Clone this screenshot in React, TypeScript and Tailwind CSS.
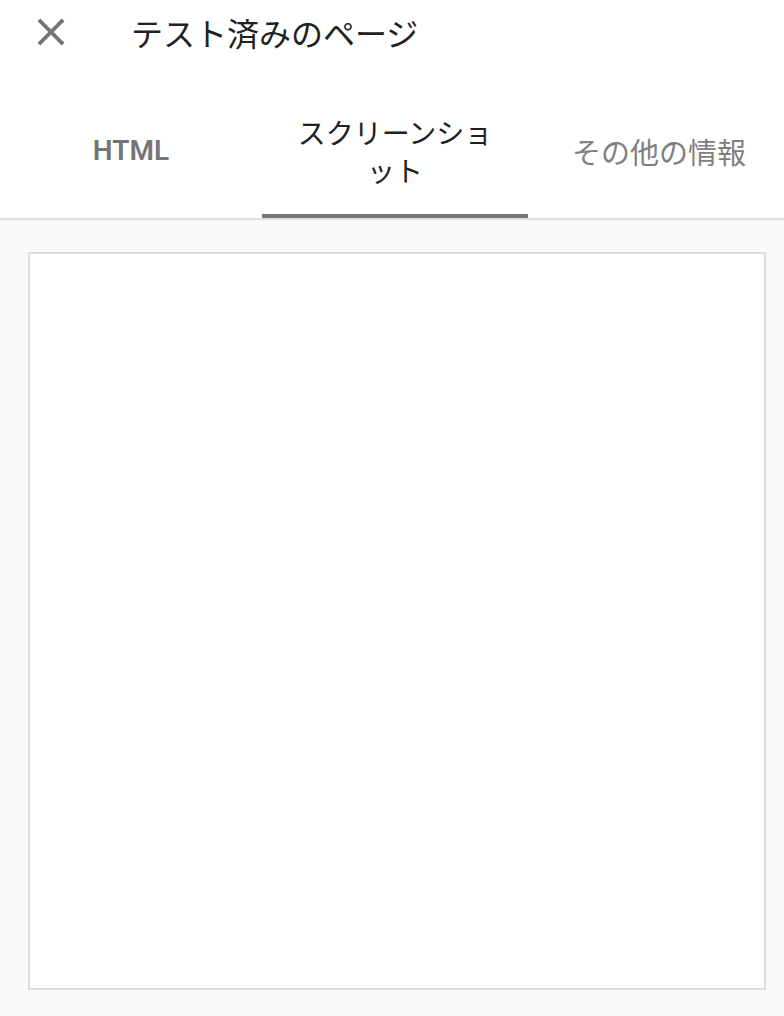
import React from 'react'

const tabs = [
  { label: 'HTML', width: 'w-[262px]', active: false, cls: 'font-semibold text-[#757575] font-[Roboto,"Noto_Sans_CJK_JP",sans-serif]' },
  { label: 'スクリーンショット', width: 'w-[266px]', active: true, cls: 'text-[#212121]' },
  { label: 'その他の情報', width: 'flex-1', active: false, cls: 'text-[#808080] text-[29px] ml-[6px]' },
]

export default function App() {
  return (
    <div className="flex h-[1016px] w-[784px] flex-col overflow-hidden bg-white font-['Noto_Sans_CJK_JP',sans-serif]">
      <header className="flex h-[64px] shrink-0 items-center">
        <button className="ml-[28px] flex h-[46px] w-[46px] items-center justify-center text-[#757575]" aria-label="閉じる">
          <svg viewBox="0 0 24 24" className="h-[46px] w-[46px]" fill="currentColor">
            <path d="M19 6.41 17.59 5 12 10.59 6.41 5 5 6.41 10.59 12 5 17.59 6.41 19 12 13.41 17.59 19 19 17.59 13.41 12z" />
          </svg>
        </button>
        <h1 className="ml-[57px] text-[32px] leading-none font-normal text-[#212121]">テスト済みのページ</h1>
      </header>

      <nav className="mt-[24px] flex h-[132px] shrink-0 border-b-2 border-[#e0e0e0]">
        {tabs.map(t => (
          <div key={t.label} className={`${t.width} relative flex items-center justify-center px-[24px] pb-[4px]`}>
            <span className={`text-center text-[28px] leading-[38px] ${t.cls}`}>{t.label}</span>
            {t.active && <div className="absolute bottom-0 left-0 right-0 h-[4px] bg-[#757575]" />}
          </div>
        ))}
      </nav>

      <main className="flex-1 bg-[#fafafa] pl-[28px] pt-[32px]">
        <div className="h-[738px] w-[738px] border-2 border-[#dddddd] bg-white" />
      </main>
    </div>
  )
}
